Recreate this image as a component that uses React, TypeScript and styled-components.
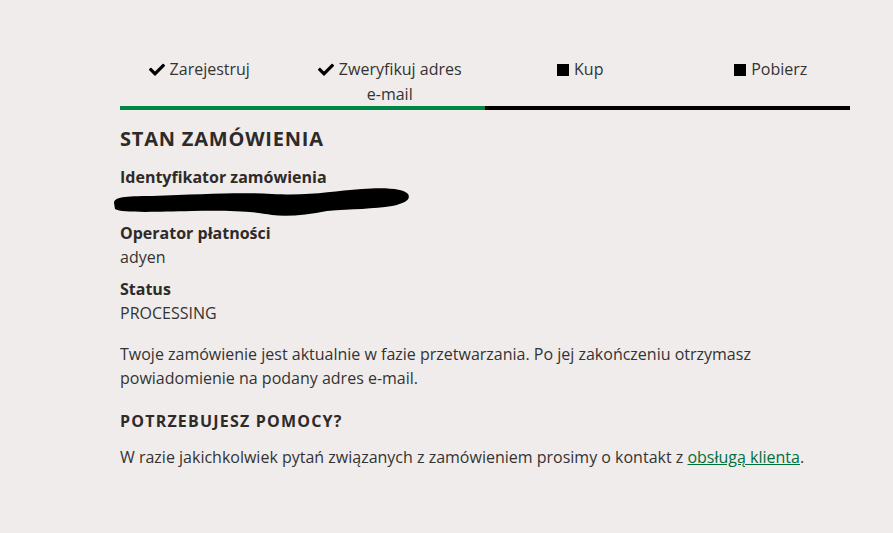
import React from "react";
import styled, { createGlobalStyle } from "styled-components";

const Global = createGlobalStyle`
  html, body { margin: 0; padding: 0; background: #f0eceb; }
  body { font-family: "Open Sans", "Noto Sans", sans-serif; color: #333; font-size: 16px; line-height: 24px; }
`;

const Page = styled.div`
  width: 730px;
  margin-left: 120px;
  padding-top: 57px;
`;

const Steps = styled.ol`
  list-style: none;
  margin: 0 -16px;
  padding: 0;
  display: grid;
  grid-template-columns: repeat(4, 1fr);
  min-height: 48px;
`;

const Step = styled.li`
  text-align: center;
  padding: 0 16px;
  font-size: 16px;
  line-height: 24px;
`;

const Icon = styled.span`
  display: inline-block;
  margin-right: 5px;
  vertical-align: -1px;
`;

const Square = styled.span`
  display: inline-block;
  width: 12px;
  height: 12px;
  background: #000;
  margin-right: 5px;
  vertical-align: -1px;
`;

const Progress = styled.div`
  height: 4px;
  background: #000;
  display: flex;
`;

const ProgressFill = styled.div`
  height: 100%;
  background: #008542;
`;

const Title = styled.h1`
  margin: 17px 0 0;
  font-size: 20px;
  line-height: 24px;
  font-weight: 700;
  letter-spacing: 0.8px;
  color: #2e2a28;
`;

const Field = styled.dl`
  margin: 14px 0 0;
  display: flex;
  flex-direction: column;
  gap: 8px;
`;

const FieldGroup = styled.div``;

const Label = styled.dt`
  font-weight: 700;
  color: #2e2a28;
`;

const Value = styled.dd`
  margin: 0;
  min-height: 24px;
  color: #333;
`;

const Redacted = styled.svg`
  display: block;
  margin: -2px 0 -6px -8px;
`;

const Paragraph = styled.p`
  margin: 17px 0 0;
  color: #333;
`;

const SubTitle = styled.h2`
  margin: 19px 0 0;
  font-size: 16px;
  line-height: 24px;
  font-weight: 700;
  letter-spacing: 1.2px;
  color: #2e2a28;
`;

const HelpText = styled.p`
  margin: 12px 0 0;
  color: #333;
`;

const Link = styled.a`
  color: #00703c;
  text-decoration: underline;
`;

const Check = () => (
  <Icon>
    <svg width="16" height="13" viewBox="0 0 512 400">
      <path
        d="M173.9 389.4l-166.4-166.4c-10-10-10-26.2 0-36.2l36.2-36.2c10-10 26.2-10 36.2 0L192 262.7 432.1 22.6c10-10 26.2-10 36.2 0l36.2 36.2c10 10 10 26.2 0 36.2l-294.4 294.4c-10 10-26.2 10-36.2 0z"
        fill="#000"
      />
    </svg>
  </Icon>
);

const steps = [
  { label: "Zarejestruj", done: true },
  { label: "Zweryfikuj adres e-mail", done: true },
  { label: "Kup", done: false },
  { label: "Pobierz", done: false },
];

export default function App() {
  const done = steps.filter((s) => s.done).length;
  return (
    <>
      <Global />
      <Page>
        <Steps>
          {steps.map((s) => (
            <Step key={s.label}>
              {s.done ? <Check /> : <Square />}
              {s.label}
            </Step>
          ))}
        </Steps>
        <Progress>
          <ProgressFill style={{ width: `${(done / steps.length) * 100}%` }} />
        </Progress>
        <Title>STAN ZAMÓWIENIA</Title>
        <Field>
          <FieldGroup>
            <Label>Identyfikator zamówienia</Label>
            <Value>
              <Redacted width="300" height="32" viewBox="0 0 300 32">
                <path
                  d="M2,16 C2,10 12,9 40,9 C90,7 130,5 160,7 C200,9 220,4 250,2 C275,0 292,2 296,7 C299,12 294,16 280,19 C262,22 240,22 215,24 C195,28 175,30 160,28 C140,24 110,23 80,24 C40,25 10,26 3,22 Z"
                  fill="#000"
                />
              </Redacted>
            </Value>
          </FieldGroup>
          <FieldGroup>
            <Label>Operator płatności</Label>
            <Value>adyen</Value>
          </FieldGroup>
          <FieldGroup>
            <Label>Status</Label>
            <Value>PROCESSING</Value>
          </FieldGroup>
        </Field>
        <Paragraph>
          Twoje zamówienie jest aktualnie w fazie przetwarzania. Po jej zakończeniu otrzymasz
          powiadomienie na podany adres e-mail.
        </Paragraph>
        <SubTitle>POTRZEBUJESZ POMOCY?</SubTitle>
        <HelpText>
          W razie jakichkolwiek pytań związanych z zamówieniem prosimy o kontakt z{" "}
          <Link href="#">obsługą klienta</Link>.
        </HelpText>
      </Page>
    </>
  );
}
